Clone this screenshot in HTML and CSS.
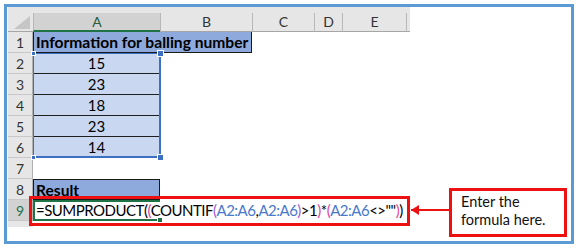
FILE: index.html
```html
<!DOCTYPE html>
<html lang="en">
<head>
  <meta charset="UTF-8" />
  <title>Count duplicates with SUMPRODUCT</title>
  <link rel="stylesheet" href="styles.css">
</head>
<body>

  <div class="frame">
    <div class="sheet">
      <div class="strip"></div>

      <!-- column headers -->
      <div class="corner">
        <svg width="16" height="13" viewBox="0 0 16 13"><polygon points="16,0 16,13 0,13" fill="#c6c6c6"/></svg>
      </div>
      <div class="col-head active">A</div>
      <div class="col-head">B</div>
      <div class="col-head">C</div>
      <div class="col-head">D</div>
      <div class="col-head">E</div>
      <div class="col-head end"></div>

      <!-- row 1 -->
      <div class="row-head">1</div>
      <div class="cell title">Information for balling number</div>
      <div class="cell"></div><div class="cell"></div><div class="cell"></div><div class="cell"></div>

      <!-- rows 2-6 -->
      <div class="row-head">2</div>
      <div class="cell data">15</div>
      <div class="cell"></div><div class="cell"></div><div class="cell"></div><div class="cell"></div><div class="cell"></div>
      <div class="row-head">3</div>
      <div class="cell data">23</div>
      <div class="cell"></div><div class="cell"></div><div class="cell"></div><div class="cell"></div><div class="cell"></div>
      <div class="row-head">4</div>
      <div class="cell data">18</div>
      <div class="cell"></div><div class="cell"></div><div class="cell"></div><div class="cell"></div><div class="cell"></div>
      <div class="row-head">5</div>
      <div class="cell data">23</div>
      <div class="cell"></div><div class="cell"></div><div class="cell"></div><div class="cell"></div><div class="cell"></div>
      <div class="row-head">6</div>
      <div class="cell data last">14</div>
      <div class="cell"></div><div class="cell"></div><div class="cell"></div><div class="cell"></div><div class="cell"></div>

      <!-- row 7 -->
      <div class="row-head">7</div>
      <div class="cell"></div><div class="cell"></div><div class="cell"></div><div class="cell"></div><div class="cell"></div><div class="cell"></div>

      <!-- row 8 -->
      <div class="row-head">8</div>
      <div class="cell result">Result</div>
      <div class="cell"></div><div class="cell"></div><div class="cell"></div><div class="cell"></div><div class="cell"></div>

      <!-- row 9 -->
      <div class="row-head active">9</div>
      <div class="cell formula">
        <span class="f-text">=SUMPRODUCT(<span class="p1">(</span>COUNTIF<span class="p2">(</span><span class="ref">A2:A6</span>,<span class="ref">A2:A6</span><span class="p2">)</span>&gt;1<span class="p1">)</span>*<span class="p1">(</span><span class="ref">A2:A6</span>&lt;&gt;""<span class="p1">)</span>)</span>
        <span class="handle"></span>
      </div>
      <div class="cell"></div><div class="cell"></div><div class="cell"></div><div class="cell"></div><div class="cell"></div>

      <div class="bottom-strip"></div>

      <!-- selection over A2:A6 -->
      <div class="selection">
        <span class="dot tl"></span>
        <span class="dot tr"></span>
        <span class="dot bl"></span>
        <span class="dot br"></span>
      </div>
    </div>

    <!-- annotations -->
    <div class="mark"></div>
    <div class="arrow"></div>
    <div class="callout">Enter the<br>formula here.</div>
  </div>

</body>
</html>
```

FILE: styles.css
```css
* { box-sizing: border-box; }

body {
  margin: 0;
  background: #fff;
  font-family: Lato, 'Open Sans', sans-serif;
}

.frame {
  position: relative;
  width: 570px;
  height: 240px;
  margin: 4px;
  border: 3px solid #5b9bd5;
  padding: 0 0 0 1px;
}

.sheet {
  position: relative;
  display: grid;
  grid-template-columns: 25px 127px 92px 62px 28px 64px 4px;
  grid-template-rows: 6px 19px repeat(9, 21px) 6px;
  width: 402px;
  font-size: 15px;
  color: #000;
}

.strip {
  grid-column: 1 / -1;
  background: #e6e6e6;
}

.corner {
  background: #e6e6e6;
  border-bottom: 1px solid #a6a6a6;
  display: flex;
  align-items: flex-end;
  justify-content: flex-end;
  padding: 0 3px 2px 0;
}

.col-head {
  background: #e6e6e6;
  border-left: 1px solid #b8b8b8;
  border-bottom: 1px solid #a6a6a6;
  color: #333;
  font-size: 14px;
  text-align: center;
  line-height: 18px;
}

.col-head.active {
  background: #d2d2d2;
  border-bottom: 2px solid #217346;
  color: #2b5d3c;
}

.row-head {
  grid-column: 1;
  background: #e6e6e6;
  border-bottom: 1px solid #c8c8c8;
  border-right: 1px solid #b0b0b0;
  font-size: 14px;
  color: #333;
  text-align: center;
  line-height: 21px;
}

.row-head.active {
  background: #d2d2d2;
  color: #217346;
}

.cell {
  line-height: 20px;
  white-space: nowrap;
}

.title {
  grid-column: span 2;
  background: #8ea9db;
  border: 1px solid #1a1a1a;
  border-top: none;
  font-weight: 700;
  font-size: 15.6px;
  padding-left: 2px;
}

.data {
  background: #c9d8f0;
  border-bottom: 1px solid #1f1f1f;
  text-align: center;
}

.data.last {
  border-bottom: none;
}

.result {
  background: #8ea9db;
  border: 1px solid #1a1a1a;
  font-weight: 700;
  font-size: 15.6px;
  padding-left: 2px;
}

/* the overflowing text hides the right edge of the active cell */
.formula {
  position: relative;
  border: 2px solid #217346;
  border-right: none;
  padding-left: 1px;
  line-height: 16px;
}

.f-text {
  position: relative;
  z-index: 2;
  letter-spacing: -0.5px;
}

.p1 { color: #e2479b; }
.p2 { color: #9c5bd3; }
.ref { color: #4a78cc; }

.handle {
  position: absolute;
  right: -3px;
  bottom: -4px;
  width: 6px;
  height: 6px;
  background: #217346;
  border: 1px solid #fff;
}

.bottom-strip {
  grid-column: 1;
  background: #e6e6e6;
}

/* absolutely placed inside its grid area, so it does not shift the cells */
.selection {
  position: absolute;
  grid-column: 2 / 3;
  grid-row: 4 / 9;
  top: 0;
  left: 0;
  right: -1px;
  bottom: 0;
  border: 2px solid #3d6fc3;
  border-top-width: 1px;
  border-left-width: 1px;
}

.dot {
  position: absolute;
  background: #3d6fc3;
  border: 1px solid #fff;
}

.dot.tl { left: -3px; top: -3px; width: 5px; height: 5px; }
.dot.tr { right: -5px; top: -4px; width: 7px; height: 7px; }
.dot.bl { left: -3px; bottom: -4px; width: 5px; height: 5px; }
.dot.br { right: -5px; bottom: -5px; width: 7px; height: 7px; }

/* annotations */
.mark {
  position: absolute;
  left: 22px;
  top: 189px;
  width: 381px;
  height: 30px;
  border: 3px solid #ee1111;
  z-index: 3;
}

.arrow {
  position: absolute;
  left: 404px;
  top: 202px;
  width: 38px;
  height: 2px;
  background: #ee1111;
}

.arrow::before {
  content: "";
  position: absolute;
  left: 0;
  top: -4px;
  border-right: 8px solid #ee1111;
  border-top: 5px solid transparent;
  border-bottom: 5px solid transparent;
}

.callout {
  position: absolute;
  left: 442px;
  top: 181px;
  width: 118px;
  height: 49px;
  border: 3px solid #ee1111;
  padding: 2px 0 0 9px;
  font-size: 14.5px;
  line-height: 18px;
  color: #111;
  background: #fff;
}
```
